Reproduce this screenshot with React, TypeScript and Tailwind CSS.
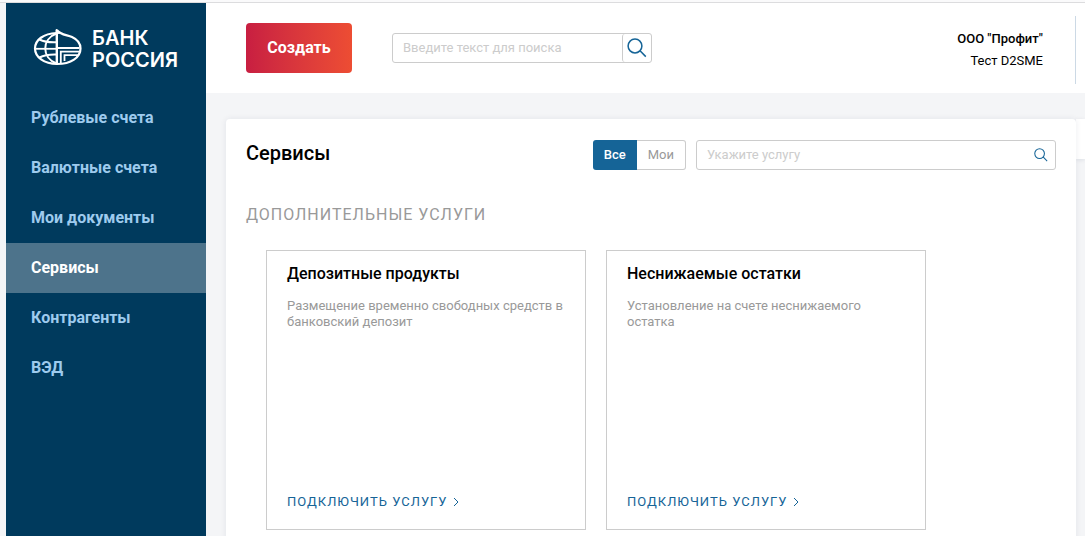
import React from 'react';

interface NavItem {
    label: string;
    active?: boolean;
}

interface Service {
    title: string;
    description: string;
}

const NAV_ITEMS: NavItem[] = [
    { label: 'Рублевые счета' },
    { label: 'Валютные счета' },
    { label: 'Мои документы' },
    { label: 'Сервисы', active: true },
    { label: 'Контрагенты' },
    { label: 'ВЭД' },
];

const SERVICES: Service[] = [
    { title: 'Депозитные продукты', description: 'Размещение временно свободных средств в банковский депозит' },
    { title: 'Неснижаемые остатки', description: 'Установление на счете неснижаемого остатка' },
];

const SearchIcon: React.FC<{ className: string }> = ({ className }) => (
    <svg className={className} viewBox="0 0 20 20" fill="none" stroke="currentColor" strokeWidth="1.5" aria-hidden="true">
        <circle cx="8" cy="8" r="6.9" />
        <path d="M13 12.8l5.8 5.8" />
    </svg>
);

const LogoMark: React.FC = () => (
    <svg className="h-[38px] w-[50px] shrink-0" viewBox="0 0 50 38" fill="none" stroke="white" aria-hidden="true">
        {/* outer shell with the dome tip */}
        <path d="M23.5 4C10.500 4.500 2 11 2 19.500S11 35 24 35c14 0 23.500-6.500 23.500-15.500 0-5.500-3-9-8.500-11.500C34 5.800 27.500 6 23.800 1" strokeWidth="2.2" />
        <path d="M22.800-1l4.700 5.500-4.700 1z" fill="white" stroke="none" />
        {/* meridians and parallels */}
        <path d="M23.500 4.500C8.500 10 8.500 29 23.500 34.500" strokeWidth="2" />
        <path d="M6.500 10.500C11.500 13 17 13.500 23.500 13.200M6.500 28.500c5-2.700 10.500-3.200 17-3" strokeWidth="2" />
        <path d="M2 19.800h22" strokeWidth="1.800" />
        <path d="M23.800 1v34" strokeWidth="2.400" />
        {/* nested corner */}
        <path d="M24.500 19H46.500M27.800 34V22.600H46.500" strokeWidth="1.800" />
        <path d="M31.500 32v-5.800H45" strokeWidth="1.800" />
    </svg>
);

const Sidebar: React.FC = () => (
    <aside className="w-[200px] shrink-0 bg-[#003a5d]">
        <a href="#" className="flex h-[90px] items-center gap-[9px] pl-[27px] text-white">
            <LogoMark />
            <span className="flex flex-col pt-0.5 font-['Inter',sans-serif] text-[20px] leading-[22px] font-semibold">
                <span>БАНК</span>
                <span>РОССИЯ</span>
            </span>
        </a>
        <nav>
            {NAV_ITEMS.map((item) => (
                <a
                    key={item.label}
                    href="#"
                    className={`flex h-[50px] items-center pl-[25px] text-base font-bold ${item.active ? 'bg-[#4d738b] text-white' : 'text-[#9ecbee]'}`}
                >
                    {item.label}
                </a>
            ))}
        </nav>
    </aside>
);

const Header: React.FC = () => (
    <header className="flex h-[90px] shrink-0 items-center bg-white pr-[9px] pl-10">
        <button type="button" className="h-[50px] min-w-[106px] rounded bg-linear-to-r from-[#c81e41] to-[#ed4d33] px-5 text-base font-bold text-white">
            Создать
        </button>
        <form className="ml-10 flex h-[30px] w-[260px] rounded-[3px] border border-[#ccc]">
            <input
                type="search"
                aria-label="Поиск"
                placeholder="Введите текст для поиска"
                className="min-w-0 flex-1 px-[10px] text-[13px] outline-none placeholder:text-[#ccc]"
            />
            <button type="button" aria-label="Найти" className="flex w-[29px] items-center justify-center rounded-[3px] border-l border-[#ccc] text-[#156497]">
                <SearchIcon className="h-5 w-5" />
            </button>
        </form>
        <div className="mt-1 ml-auto flex h-[68px] flex-col justify-center border-r border-[#ccd9e5] pr-8 text-right text-[13px] leading-[22px] text-black">
            <span className="font-medium">ООО "Профит"</span>
            <span>Тест D2SME</span>
        </div>
    </header>
);

const ServiceCard: React.FC<Service> = ({ title, description }) => (
    <article className="flex h-[280px] w-[320px] flex-col border border-[#ccc] px-5 pt-3 pb-[17px]">
        <h3 className="text-base leading-[22px] font-medium text-black">{title}</h3>
        <p className="mt-[13px] text-[13px] leading-4 text-[#999]">{description}</p>
        <a href="#" className="mt-auto flex items-center gap-1.5 text-[13px] leading-5 tracking-[1px] text-[#156497] uppercase">
            Подключить услугу
            <svg className="h-[10px] w-[6px]" viewBox="0 0 6 10" fill="none" stroke="currentColor" aria-hidden="true">
                <path d="M1 1l4 4-4 4" />
            </svg>
        </a>
    </article>
);

const Services: React.FC = () => (
    <section className="relative min-w-0 flex-1 rounded-t bg-white px-5 pt-[21px] shadow-[0_0_6px_rgba(0,40,80,0.08)]">
        <div className="flex items-start">
            <h1 className="text-xl leading-[26px] font-medium text-black">Сервисы</h1>
            <div className="ml-auto flex h-[30px] text-[13px]">
                <button type="button" className="rounded-l-[3px] bg-[#156497] px-[11px] font-medium text-white">Все</button>
                <button type="button" className="rounded-r-[3px] border border-l-0 border-[#ccc] px-[11px] text-[#999]">Мои</button>
            </div>
            <label className="ml-[10px] flex h-[30px] w-[360px] items-center rounded-[3px] border border-[#ccc] px-[10px] text-[#156497]">
                <input
                    type="text"
                    aria-label="Услуга"
                    placeholder="Укажите услугу"
                    className="min-w-0 flex-1 text-[13px] outline-none placeholder:text-[#ccc]"
                />
                <SearchIcon className="-mr-[3px] h-[14px] w-[14px]" />
            </label>
        </div>
        <h2 className="mt-[33px] text-base leading-6 tracking-[1px] text-[#999] uppercase">Дополнительные услуги</h2>
        <div className="mt-[23px] flex flex-wrap gap-5 px-5 pb-6">
            {SERVICES.map((service) => (
                <ServiceCard key={service.title} {...service} />
            ))}
        </div>
    </section>
);

const App: React.FC = () => (
    <div className="flex h-screen flex-col overflow-hidden bg-[#f4f5f7] font-['Roboto',sans-serif]">
        <div className="h-[3px] shrink-0 border-b border-[#dcdcde] bg-[#fafafb]" />
        <div className="flex min-h-0 flex-1 pl-[6px]">
            <Sidebar />
            <div className="flex min-w-0 flex-1 flex-col">
                <Header />
                <main className="flex flex-1 pt-[26px] pl-5">
                    <Services />
                    <div className="h-10 w-[9px] bg-white shadow-[0_1px_4px_rgba(0,40,80,0.10)]" />
                </main>
            </div>
        </div>
    </div>
);

export default App;
